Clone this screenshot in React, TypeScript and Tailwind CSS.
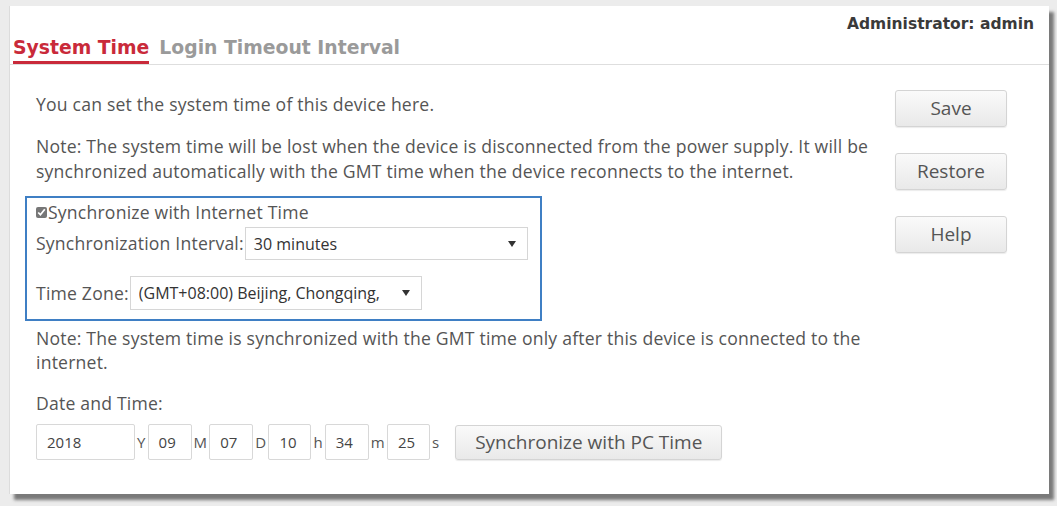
import React, { useState } from 'react'

// ── Campos de data/hora ──────────────────────────────────────
const DATE_FIELDS = [
    { value: '2018', unit: 'Y', w: 'w-[99px]' },
    { value: '09', unit: 'M', w: 'w-[44px]' },
    { value: '07', unit: 'D', w: 'w-[44px]' },
    { value: '10', unit: 'h', w: 'w-[43px]' },
    { value: '34', unit: 'm', w: 'w-[44px]' },
    { value: '25', unit: 's', w: 'w-[43px]' },
]

const body = "font-['Open_Sans','Noto_Sans',sans-serif]"
const title = "font-['DejaVu_Sans','Verdana',sans-serif]"

function Caret() {
    return (
        <svg width="8" height="6" viewBox="0 0 8 6" className="shrink-0">
            <path d="M0 0 L8 0 L4 6 Z" fill="#333" />
        </svg>
    )
}

function FakeSelect({ value, className }: { value: string; className: string }) {
    return (
        <div className={`flex items-center justify-between gap-[20px] border border-[#d6d6d6] bg-white pl-[8px] pr-[11px] text-[16px] tracking-normal text-[#333] ${className}`}>
            <span className="overflow-hidden whitespace-nowrap">{value}</span>
            <Caret />
        </div>
    )
}

function SideButton({ label }: { label: string }) {
    return (
        <button className="w-[112px] h-[37px] rounded-[3px] border border-[#d4d4d4] bg-gradient-to-b from-[#fafafa] to-[#e9e9e9] text-[19px] text-[#555] shadow-[0_1px_1px_rgba(0,0,0,0.08)]">
            {label}
        </button>
    )
}

export default function App() {
    const [sync, setSync] = useState(true)

    return (
        <div className={`w-[1057px] h-[506px] bg-[#ececec] pt-[6px] pl-[9px] ${body}`}>
            <div className="w-[1040px] h-[488px] bg-white border-l border-[#dcdcdc] shadow-[5px_6px_3px_#7a7a7a] flex flex-col">
                {/* cabeçalho com abas */}
                <div className="relative h-[59px] border-b border-[#dedede] flex items-end pl-[3px]">
                    <span className={`absolute right-[15px] top-[7px] text-[15.5px] font-bold text-[#3a3a3a] ${title}`}>
                        Administrator: admin
                    </span>
                    <div className={`flex items-end gap-[10px] text-[18.8px] font-bold ${title}`}>
                        <span className="text-[#c92a3a] border-b-[3px] border-[#c92a3a] pb-[1px] leading-[24px]">System Time</span>
                        <span className="text-[#9a9a9a] pb-[4px] leading-[24px]">Login Timeout Interval</span>
                    </div>
                </div>

                <div className="flex flex-1">
                    {/* formulário */}
                    <div className="w-[872px] pl-[15px] pt-[28px] text-[17.6px] tracking-[0.2px] text-[#555]">
                        <p className="pl-[11px] leading-[22px]">You can set the system time of this device here.</p>
                        <p className="pl-[11px] mt-[19px] leading-[25px]">
                            Note: The system time will be lost when the device is disconnected from the power supply. It will be synchronized automatically with the GMT time when the device reconnects to the internet.
                        </p>

                        <div className="mt-[12px] w-[517px] h-[125px] border-2 border-[#3f7fc4] pl-[9px] pt-[3px]">
                            <label className="flex items-center leading-[22px]">
                                <input
                                    type="checkbox"
                                    checked={sync}
                                    onChange={() => setSync(!sync)}
                                    className="w-[11px] h-[11px] m-0 mr-[1px] accent-[#777]"
                                />
                                Synchronize with Internet Time
                            </label>
                            <div className="flex items-center mt-[4px]">
                                <span className="whitespace-nowrap">Synchronization Interval:</span>
                                <FakeSelect value="30 minutes" className="flex-1 mr-[12px] h-[33px] ml-[1px]" />
                            </div>
                            <div className="flex items-center mt-[16px]">
                                <span className="whitespace-nowrap">Time Zone:</span>
                                <FakeSelect value="(GMT+08:00) Beijing, Chongqing, Hong Kong" className="w-[292px] h-[34px] ml-[1px]" />
                            </div>
                        </div>

                        <p className="pl-[11px] mt-[5px] leading-[24px]">
                            Note: The system time is synchronized with the GMT time only after this device is connected to the internet.
                        </p>
                        <p className="pl-[11px] mt-[18px] leading-[22px]">Date and Time:</p>

                        <div className="flex items-center pl-[11px] mt-[10px]">
                            {DATE_FIELDS.map(f => (
                                <div key={f.unit} className="flex items-center">
                                    <div className={`${f.w} h-[36px] border border-[#d8d8d8] rounded-[2px] flex items-center pl-[10px] text-[15px] tracking-normal text-[#444]`}>
                                        {f.value}
                                    </div>
                                    <span className="px-[2px] text-[15px]">{f.unit}</span>
                                </div>
                            ))}
                            <button className="ml-[14px] w-[267px] h-[35px] rounded-[3px] border border-[#d4d4d4] bg-gradient-to-b from-[#fafafa] to-[#e9e9e9] text-[19px] tracking-normal text-[#555] shadow-[0_1px_1px_rgba(0,0,0,0.08)]">
                                Synchronize with PC Time
                            </button>
                        </div>
                    </div>

                    {/* ações */}
                    <div className="flex flex-col items-start gap-[26px] pl-[13px] pt-[25px]">
                        <SideButton label="Save" />
                        <SideButton label="Restore" />
                        <SideButton label="Help" />
                    </div>
                </div>
            </div>
        </div>
    )
}
